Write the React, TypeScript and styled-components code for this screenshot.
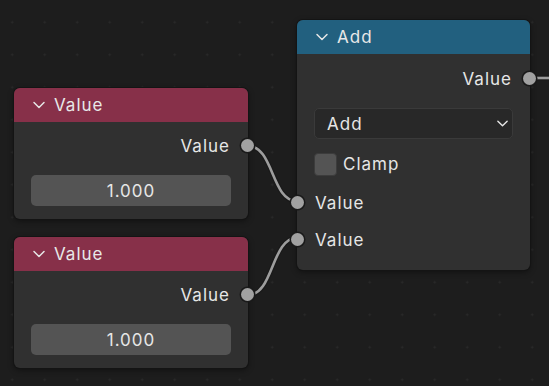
import * as React from 'react';
import styled, { createGlobalStyle } from 'styled-components';

const GlobalStyle = createGlobalStyle`
    html, body {
        margin: 0;
        padding: 0;
        background: #1d1d1d;
    }
    * {
        box-sizing: border-box;
    }
`;

const Canvas = styled.div`
    position: relative;
    width: 549px;
    height: 386px;
    overflow: hidden;
    background-color: #1d1d1d;
    background-image: radial-gradient(circle, #2a2a2a 0.9px, transparent 1.2px);
    background-size: 32.5px 32.5px;
    background-position: -4px 6px;
    font-family: Inter, "Noto Sans", "DejaVu Sans", sans-serif;
    font-size: 17px;
    letter-spacing: 1px;
    color: #e6e6e6;
`;

const Links = styled.svg`
    position: absolute;
    left: 0;
    top: 0;
`;

const Node = styled.div<{ $x: number; $y: number; $w: number }>`
    position: absolute;
    left: ${p => p.$x}px;
    top: ${p => p.$y}px;
    width: ${p => p.$w}px;
    background: #303030;
    border-radius: 6px;
    box-shadow: 0 0 0 1px #141414, 0 2px 6px rgba(0, 0, 0, 0.45);
`;

const Header = styled.div<{ $color: string }>`
    display: flex;
    align-items: center;
    gap: 8px;
    height: 34px;
    padding-left: 18px;
    background: ${p => p.$color};
    border-radius: 6px 6px 0 0;
    color: #e8e8e8;
`;

const Body = styled.div<{ $top: number; $bottom: number }>`
    display: flex;
    flex-direction: column;
    padding: ${p => p.$top}px 17px ${p => p.$bottom}px 17px;
`;

const Row = styled.div<{ $side: 'in' | 'out' }>`
    position: relative;
    display: flex;
    align-items: center;
    justify-content: ${p => (p.$side === 'out' ? 'flex-end' : 'flex-start')};
    height: 37px;
    padding: 0 1px;
`;

const Socket = styled.span<{ $side: 'in' | 'out' }>`
    position: absolute;
    top: 50%;
    ${p => (p.$side === 'out' ? 'right: -23px;' : 'left: -23px;')}
    width: 13px;
    height: 13px;
    margin-top: -6.5px;
    border-radius: 50%;
    background: #a1a1a1;
    box-shadow: 0 0 0 1.5px #1a1a1a;
`;

const Field = styled.div`
    display: flex;
    align-items: center;
    justify-content: center;
    height: 31px;
    margin-top: 11px;
    background: #545454;
    border-radius: 5px;
    color: #e6e6e6;
`;

const Dropdown = styled.div`
    display: flex;
    align-items: center;
    justify-content: space-between;
    height: 31px;
    margin-top: 11px;
    padding: 0 3px 0 12px;
    background: #282828;
    border: 1px solid #3a3a3a;
    border-radius: 5px;
`;

const CheckRow = styled.div`
    display: flex;
    align-items: center;
    gap: 6px;
    height: 24px;
    margin-top: 13px;
    margin-bottom: 8px;
`;

const CheckBox = styled.span`
    width: 23px;
    height: 23px;
    background: #545454;
    border-radius: 4px;
    border: 1px solid #3c3c3c;
`;

const Chevron = ({ size = 14 }: { size?: number }) => (
    <svg width={size} height={size} viewBox="0 0 14 14">
        <path d="M2 4.5 L7 9.5 L12 4.5" fill="none" stroke="#e6e6e6" strokeWidth="1.5" strokeLinecap="round" strokeLinejoin="round" />
    </svg>
);

const Link = ({ d }: { d: string }) => (
    <g>
        <path d={d} fill="none" stroke="#1a1a1a" strokeWidth="5" />
        <path d={d} fill="none" stroke="#9d9d9d" strokeWidth="2.6" />
    </g>
);

const ValueNode = ({ x, y }: { x: number; y: number }) => (
    <Node $x={x} $y={y} $w={234}>
        <Header $color="#873049">
            <Chevron />
            <span>Value</span>
        </Header>
        <Body $top={5} $bottom={13}>
            <Row $side="out">
                Value
                <Socket $side="out" />
            </Row>
            <Field>1.000</Field>
        </Body>
    </Node>
);

const App: React.FC = (): JSX.Element => {
    return (
        <>
            <GlobalStyle />
            <Canvas>
                <Links width={549} height={386}>
                    <Link d="M248 146 C274 146 271 201 297 201" />
                    <Link d="M248 295 C274 295 271 238 297 238" />
                    <Link d="M530 78 L552 78" />
                </Links>
                <ValueNode x={14} y={88} />
                <ValueNode x={14} y={237} />
                <Node $x={297} $y={20} $w={233}>
                    <Header $color="#22607f">
                        <Chevron />
                        <span>Add</span>
                    </Header>
                    <Body $top={6} $bottom={12}>
                        <Row $side="out">
                            Value
                            <Socket $side="out" />
                        </Row>
                        <Dropdown>
                            <span>Add</span>
                            <Chevron size={13} />
                        </Dropdown>
                        <CheckRow>
                            <CheckBox />
                            <span>Clamp</span>
                        </CheckRow>
                        <Row $side="in">
                            Value
                            <Socket $side="in" />
                        </Row>
                        <Row $side="in">
                            Value
                            <Socket $side="in" />
                        </Row>
                    </Body>
                </Node>
            </Canvas>
        </>
    );
};

export default App;
